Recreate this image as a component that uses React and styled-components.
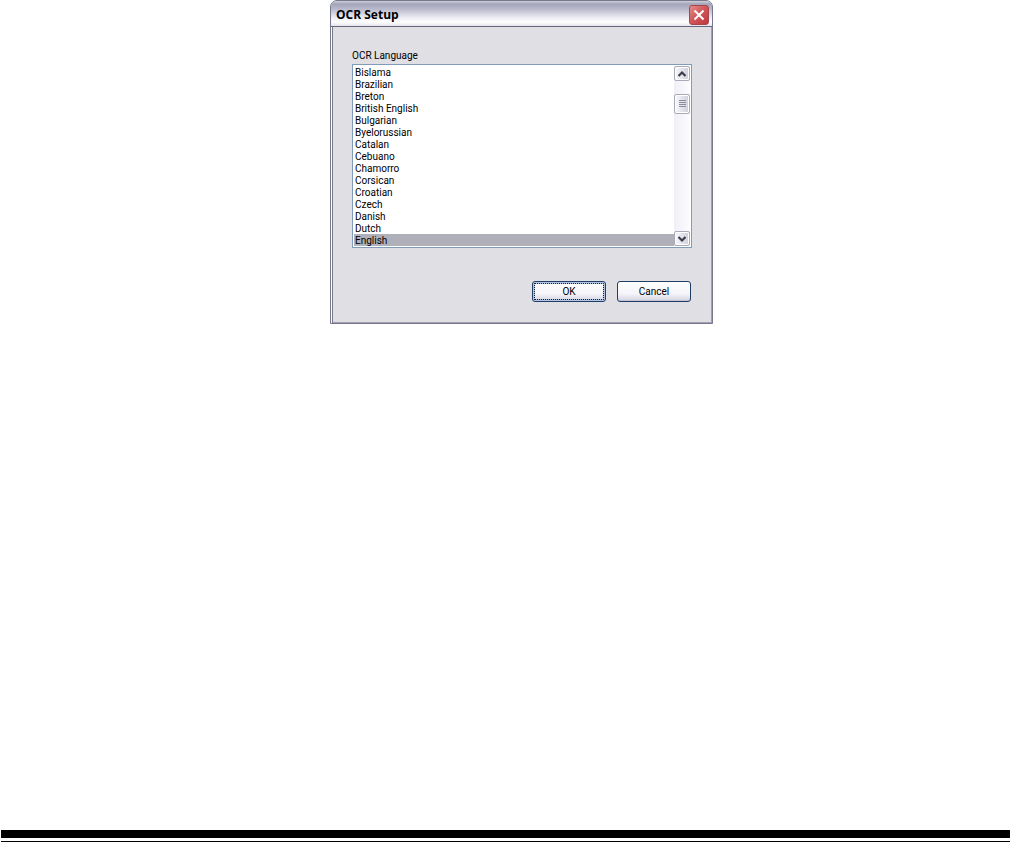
import React, { useState } from 'react';
import styled, { createGlobalStyle } from 'styled-components';

const GlobalStyle = createGlobalStyle`
  * {
    box-sizing: border-box;
  }
  body {
    margin: 0;
    background: #fff;
    color: #000;
    font: 10px/12px Roboto, 'Noto Sans', sans-serif;
  }
`;

const Page = styled.div`
  min-height: 100vh;
  display: flex;
  flex-direction: column;
  justify-content: space-between;
`;

const Main = styled.main`
  display: flex;
  justify-content: center;
  padding-left: 31px;
`;

const Dialog = styled.section`
  width: 100%;
  max-width: 383px;
  background: #dfdfe4;
  border: 1px solid #77778d;
  border-radius: 7px 7px 0 0;
  box-shadow: inset 1px 0 #fff, inset 2px 0 #77778d,
    inset -1px -1px #a0a0b2;
`;

const TitleBar = styled.header`
  height: 26px;
  display: flex;
  align-items: center;
  justify-content: space-between;
  padding: 3px 3px 0 5px;
  border-bottom: 1px solid #66667e;
  border-radius: 6px 6px 0 0;
  background: linear-gradient(
    #d0d0dc 0,
    #a4a4ba 3px,
    #b9b9cc 8px,
    #e8e8f0 16px,
    #fff 21px,
    #e4e4ec 25px
  );
`;

const Title = styled.h1`
  margin: 0;
  font: bold 12px/16px 'Open Sans', 'Noto Sans', sans-serif;
`;

const CloseButton = styled.button`
  width: 20px;
  height: 20px;
  padding: 0;
  display: flex;
  align-items: center;
  justify-content: center;
  border: 1px solid #a8454b;
  border-radius: 3px;
  background: linear-gradient(135deg, #e58e8c, #d2585b 45%, #bd383e);
`;

const Body = styled.div`
  padding: 21px 20px 21px 21px;
`;

const Label = styled.label`
  display: block;
  height: 16px;
  line-height: 16px;
`;

const ListBox = styled.div`
  display: flex;
  height: 184px;
  padding: 1px;
  background: #fff;
  border: 1px solid #7f9db9;
`;

const List = styled.select`
  flex: 1;
  min-width: 0;
  height: 180px;
  padding: 0;
  border: 0;
  border-radius: 0;
  outline: 0;
  overflow: hidden;
  scrollbar-width: none;
  background: #fff;
  color: #000;
  font: inherit;
`;

const Option = styled.option`
  height: 12px;
  min-height: 12px;
  padding: 1px 1px 0;
  line-height: 11px;
  color: #000;

  &:checked {
    color: #000;
    background: #b0b0ba linear-gradient(#b0b0ba, #b0b0ba);
  }
`;

const ScrollBar = styled.div`
  width: 16px;
  display: flex;
  flex-direction: column;
  background: linear-gradient(90deg, #efeff6, #fdfdff);
`;

const ScrollPart = styled.button`
  height: ${({ $tall }) => ($tall ? 20 : 15)}px;
  padding: 0;
  display: flex;
  align-items: center;
  justify-content: center;
  border: 1px solid #a9a9b8;
  border-radius: 2px;
  box-shadow: inset 0 0 0 1px #fff;
  background: linear-gradient(90deg, #f8f8fc, #cfcfdb);
`;

const Track = styled.div`
  flex: 1;
  display: flex;
  flex-direction: column;
  padding-top: 13px;
`;

const Actions = styled.div`
  display: flex;
  justify-content: flex-end;
  gap: 11px;
  margin-top: 33px;
  padding-right: 1px;
`;

const Button = styled.button`
  width: 74px;
  height: 21px;
  padding: 0;
  border: 1px solid #1f3f69;
  border-radius: 3px;
  background: linear-gradient(#fff, #f5f5fa 60%, #d4d4e2);
  box-shadow: ${({ $primary }) =>
    $primary ? 'inset 0 0 0 2px #b4c4e0' : 'inset 0 -1px #c3c3d3'};
  outline: ${({ $primary }) => ($primary ? '1px dotted #222' : '0')};
  outline-offset: -3px;
  color: #000;
  font: inherit;
`;

const Rule = styled.footer`
  height: 12px;
  margin: 0 2px 5px 1px;
  border-top: 8px solid #000;
  border-bottom: 1px solid #000;
`;

const languages = [
  'Bislama',
  'Brazilian',
  'Breton',
  'British English',
  'Bulgarian',
  'Byelorussian',
  'Catalan',
  'Cebuano',
  'Chamorro',
  'Corsican',
  'Croatian',
  'Czech',
  'Danish',
  'Dutch',
  'English',
];

const Arrow = ({ down }) => (
  <svg width="10" height="8" viewBox="0 0 10 8" fill="none" aria-hidden="true">
    <path
      d={down ? 'M1.5 2 5 5.5 8.5 2' : 'M1.5 6 5 2.5 8.5 6'}
      stroke="#3c3c4c"
      strokeWidth="2.2"
    />
  </svg>
);

const App = () => {
  const [language, setLanguage] = useState('English');

  return (
    <Page>
      <GlobalStyle />
      <Main>
        <Dialog role="dialog" aria-labelledby="title">
          <TitleBar>
            <Title id="title">OCR Setup</Title>
            <CloseButton type="button" aria-label="Close">
              <svg width="12" height="12" viewBox="0 0 12 12" aria-hidden="true">
                <path
                  d="M1.5 1.5 10.5 10.5M10.5 1.5 1.5 10.5"
                  stroke="#fff"
                  strokeWidth="2"
                />
              </svg>
            </CloseButton>
          </TitleBar>
          <Body>
            <Label htmlFor="language">OCR Language</Label>
            <ListBox>
              <List
                id="language"
                size={15}
                value={language}
                onChange={(e) => setLanguage(e.target.value)}
              >
                {languages.map((name) => (
                  <Option key={name} value={name}>
                    {name}
                  </Option>
                ))}
              </List>
              <ScrollBar>
                <ScrollPart type="button" aria-label="Scroll up">
                  <Arrow />
                </ScrollPart>
                <Track>
                  <ScrollPart type="button" $tall aria-label="Scroll position">
                    <svg width="7" height="8" viewBox="0 0 7 8" aria-hidden="true">
                      <path
                        d="M0 .5H7M0 2.5H7M0 4.5H7M0 6.5H7"
                        stroke="#8c8c9e"
                      />
                    </svg>
                  </ScrollPart>
                </Track>
                <ScrollPart type="button" aria-label="Scroll down">
                  <Arrow down />
                </ScrollPart>
              </ScrollBar>
            </ListBox>
            <Actions>
              <Button type="submit" $primary>
                OK
              </Button>
              <Button type="button">Cancel</Button>
            </Actions>
          </Body>
        </Dialog>
      </Main>
      <Rule />
    </Page>
  );
};

export default App;
